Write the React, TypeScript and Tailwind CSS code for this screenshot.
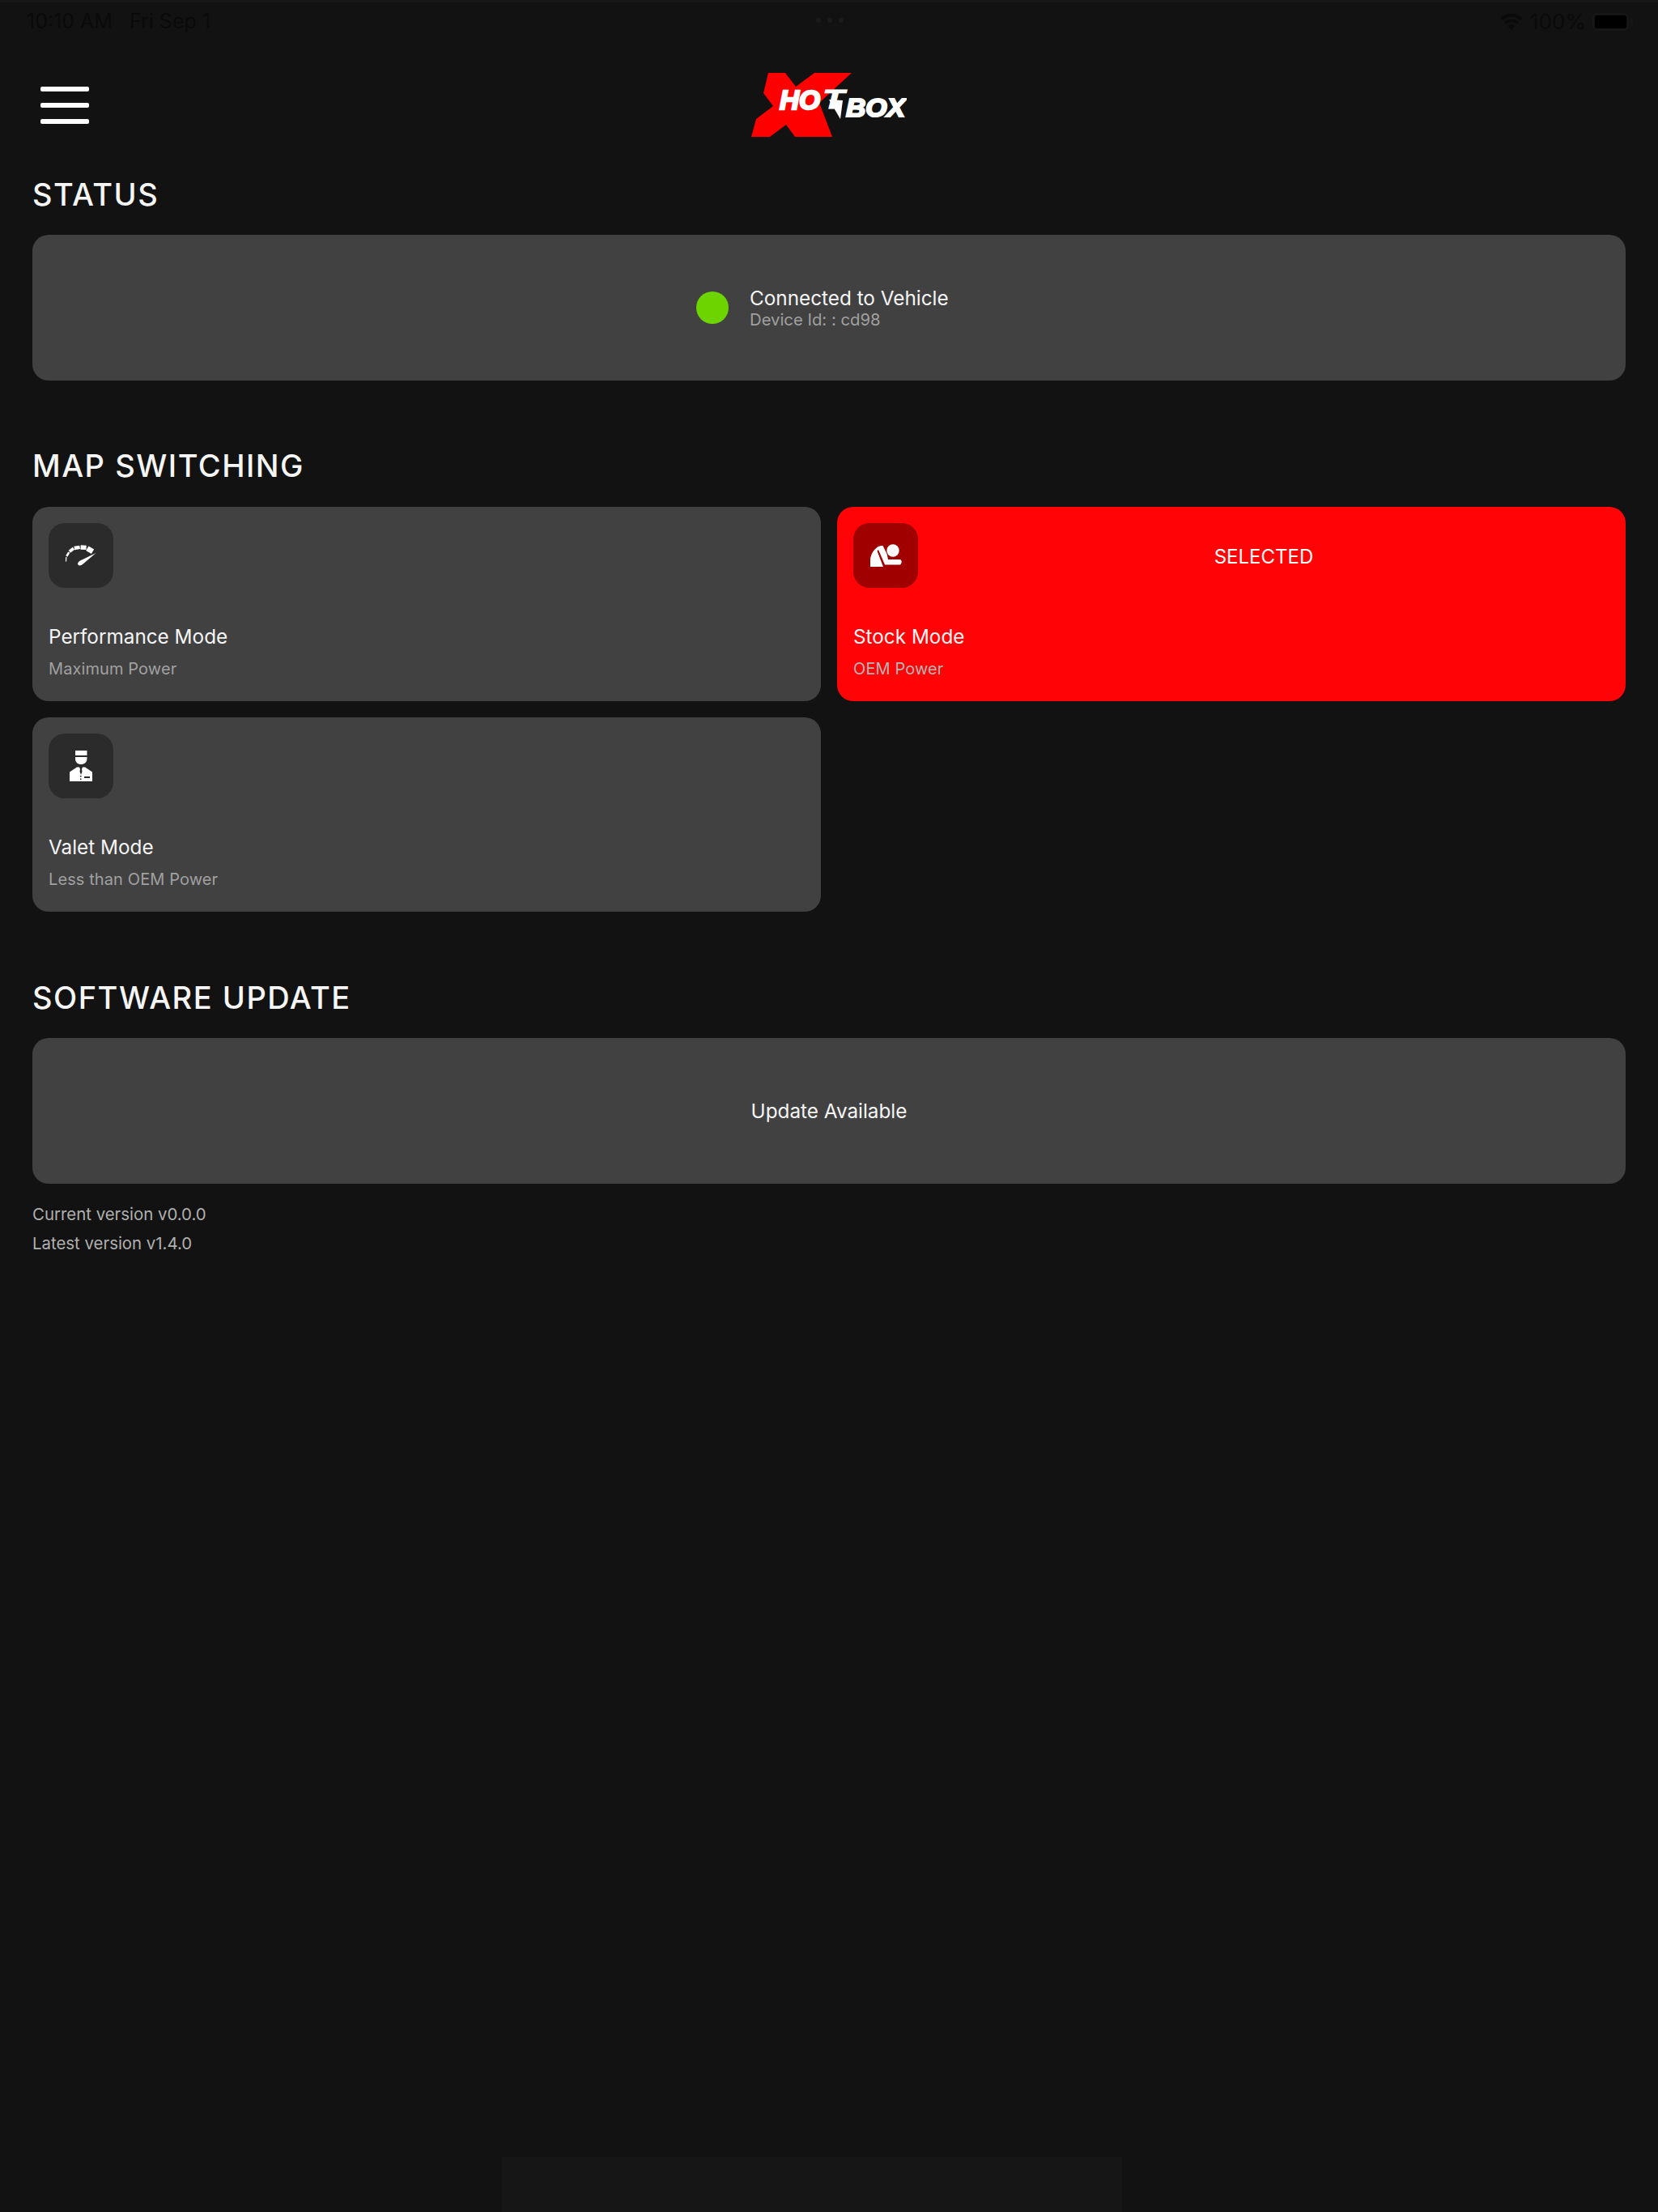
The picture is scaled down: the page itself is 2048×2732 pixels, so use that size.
import React from "react";

function GaugeIcon() {
  return (
    <svg viewBox="0 0 80 80" className="w-[80px] h-[80px]" fill="none" stroke="#fff">
      <path d="M21.5 47.5 L21.8 42" strokeWidth="1.2" />
      <path d="M22.3 41 L25.2 36.2" strokeWidth="2.6" />
      <path d="M25.8 35.2 L31 31.2" strokeWidth="3.8" />
      <path d="M31.8 31 L38.6 29.8" strokeWidth="4.4" />
      <path d="M39.6 30 L46.6 30.4" strokeWidth="5.4" />
      <path d="M47.8 31.2 L54.5 35.2" strokeWidth="6.4" />
      <path d="M58.5 37 L40 46 C36 48 35.5 50 36.5 51.5 C38 53 40 52.5 42 51 Z" fill="#fff" stroke="none" />
    </svg>
  );
}

function SeatIcon() {
  return (
    <svg viewBox="0 0 80 80" className="w-[80px] h-[80px]" fill="#fff">
      <circle cx="49" cy="34" r="7.7" />
      <path d="M21 54 L21 44 C22 38 25 33 30 29.5 C32 28 35 28 36.5 28 L41.5 38 L43 45 L57 45 C59.5 45 60 47 59.5 49 C59 51 58 51.5 57 51.5 L39 51.5 L31 33 L29.5 34.5 L37 54 Z" />
    </svg>
  );
}

function ValetIcon() {
  return (
    <svg viewBox="0 0 80 80" className="w-[80px] h-[80px]" fill="#fff">
      <rect x="33" y="21" width="14.5" height="6" />
      <path d="M33 29 H47.5 V31 C47.5 35.5 44 38 40 38 C36 38 33 35.5 33 31 Z" />
      <path d="M26 59 V47.5 L35 41.5 H38 L39 44 L38.5 47 L40 51 L41.5 47 L41 44 L42 41.5 H45 L54 47.5 V59 Z" />
      <rect x="44" y="53" width="7" height="2" fill="#2b2b2b" />
      <rect x="39" y="52" width="1.5" height="1.5" fill="#2b2b2b" />
      <rect x="39" y="55.5" width="1.5" height="1.5" fill="#2b2b2b" />
    </svg>
  );
}

function Logo() {
  return (
    <svg viewBox="0 0 192 80" className="w-[192px] h-[80px]">
      <path
        d="M21 0 H42 L55 17 L78 0 H124 L84 37 L100 79 H54 L43 64 L23 79 H0 L6 57 L27 41 L15 25 Z"
        fill="#ff0000"
      />
      <text
        x="35"
        y="45"
        fontFamily="'Liberation Sans', sans-serif"
        fontSize="33"
        fontWeight="700"
        fontStyle="italic"
        fill="#fff"
        stroke="#fff"
        strokeWidth="2.4"
        textLength="50"
        lengthAdjust="spacingAndGlyphs"
      >
        HO
      </text>
      <text
        x="88"
        y="44"
        fontFamily="'Liberation Sans', sans-serif"
        fontSize="33"
        fontWeight="700"
        fontStyle="italic"
        fill="#fff"
        stroke="#fff"
        strokeWidth="1"
        textLength="27"
        lengthAdjust="spacingAndGlyphs"
      >
        T
      </text>
      <path d="M96 33 L110 57 L113 34 Z" fill="#fff" />
      <text
        x="117"
        y="54"
        fontFamily="'Liberation Sans', sans-serif"
        fontSize="32"
        fontWeight="700"
        fontStyle="italic"
        fill="#fff"
        stroke="#fff"
        strokeWidth="2.2"
        textLength="73"
        lengthAdjust="spacingAndGlyphs"
      >
        BOX
      </text>
    </svg>
  );
}

function SectionTitle({ children, className }: { children: React.ReactNode; className: string }) {
  return (
    <h2 className={`text-[38px] leading-[46px] font-medium text-[#f5f5f5] tracking-[1.5px] ${className}`}>
      {children}
    </h2>
  );
}

function ModeCard({
  icon,
  title,
  sub,
  selected,
}: {
  icon: React.ReactNode;
  title: string;
  sub: string;
  selected?: boolean;
}) {
  return (
    <div className={`h-[240px] rounded-[20px] p-[20px] ${selected ? "bg-[#ff0306]" : "bg-[#414141]"}`}>
      <div className="flex items-center">
        <div
          className={`w-[80px] h-[80px] rounded-[20px] ${selected ? "bg-[#a00000]" : "bg-[#2b2b2b]"}`}
        >
          {icon}
        </div>
        {selected && (
          <div className="flex-1 text-center text-[24px] leading-[30px] pt-[3px] text-white">SELECTED</div>
        )}
      </div>
      <div className="mt-[45px] text-[24.3px] leading-[30px] text-[#f5f5f5]">{title}</div>
      <div className={`mt-[10px] text-[20px] leading-[30px] tracking-[0.1px] ${selected ? "text-[#b4b4b4]" : "text-[#a0a0a0]"}`}>
        {sub}
      </div>
    </div>
  );
}

export default function App() {
  return (
    <div className="relative w-[2048px] h-[2732px] overflow-hidden bg-[#121212] font-['Inter',sans-serif]">
      {/* ghost of the status bar, nearly the same shade as the page */}
      <div className="h-[50px] border-t-[3px] border-[#171717] flex items-center justify-between pl-[33px] pr-[31px] text-[#0a0a0a]">
        <div className="flex gap-[21px] text-[25px]">
          <span>10:10 AM</span>
          <span>Fri Sep 1</span>
        </div>
        <div className="flex items-center text-[26px]">
          <svg viewBox="0 0 28 20" className="w-[28px] h-[20px] mr-[9px]" fill="#0a0a0a">
            <path d="M14 20 L9.5 15 C12 12.6 16 12.6 18.5 15 Z" />
            <path d="M7.5 12.8 L5 10 C9.8 5.5 18.2 5.5 23 10 L20.5 12.8 C16.8 9.4 11.2 9.4 7.5 12.8 Z" />
            <path d="M3 8 L0.5 5.2 C8 -1.7 20 -1.7 27.5 5.2 L25 8 C18.8 2.3 9.2 2.3 3 8 Z" />
          </svg>
          <span>100%</span>
          <div className="ml-[8px] w-[45px] h-[22px] rounded-[6px] border-2 border-[#171717] p-px">
            <div className="w-full h-full rounded-[3px] bg-black" />
          </div>
          <div className="ml-[2px] w-[3px] h-[8px] rounded-r-[2px] bg-[#171717]" />
        </div>
      </div>

      <div className="absolute top-[22px] left-[1008px] flex gap-[8px]">
        <div className="w-[6px] h-[6px] rounded-full bg-[#1b1b1b]" />
        <div className="w-[6px] h-[6px] rounded-full bg-[#1b1b1b]" />
        <div className="w-[6px] h-[6px] rounded-full bg-[#1b1b1b]" />
      </div>

      {/* nav */}
      <div className="relative h-[167px] pt-[40px] flex justify-center">
        <div className="absolute left-[50px] top-[57px] flex flex-col gap-[14px]">
          <div className="w-[60px] h-[6px] rounded-[2px] bg-white" />
          <div className="w-[60px] h-[6px] rounded-[2px] bg-white" />
          <div className="w-[60px] h-[6px] rounded-[2px] bg-white" />
        </div>
        <div>
          <Logo />
        </div>
      </div>

      <div className="px-[40px]">
        <SectionTitle className="">STATUS</SectionTitle>
        <div className="mt-[27px] h-[180px] rounded-[20px] bg-[#414141] flex items-center justify-center gap-[26px]">
          <div className="w-[40px] h-[40px] rounded-full bg-[#6dd400]" />
          <div className="w-[262px] pt-px">
            <div className="text-[24.3px] leading-[28px] text-[#f5f5f5]">Connected to Vehicle</div>
            <div className="text-[20.3px] leading-[26px] text-[#a0a0a0]">Device Id: : cd98</div>
          </div>
        </div>

        <SectionTitle className="mt-[82px]">MAP SWITCHING</SectionTitle>
        <div className="mt-[28px] grid grid-cols-2 gap-[20px]">
          <ModeCard icon={<GaugeIcon />} title="Performance Mode" sub="Maximum Power" />
          <ModeCard icon={<SeatIcon />} title="Stock Mode" sub="OEM Power" selected />
          <ModeCard icon={<ValetIcon />} title="Valet Mode" sub="Less than OEM Power" />
        </div>

        <SectionTitle className="mt-[83px]">SOFTWARE UPDATE</SectionTitle>
        <div className="mt-[27px] h-[180px] rounded-[20px] bg-[#414141] flex items-center justify-center text-[24.3px] text-[#f5f5f5]">
          Update Available
        </div>
        <div className="mt-[20px] text-[20.4px] leading-[36px] text-[#b0b0b0]">
          <div>Current version v0.0.0</div>
          <div>Latest version v1.4.0</div>
        </div>
      </div>

      {/* faint panel peeking in at the bottom edge */}
      <div className="absolute left-[620px] bottom-0 w-[766px] h-[68px] bg-[#161616]" />
    </div>
  );
}
